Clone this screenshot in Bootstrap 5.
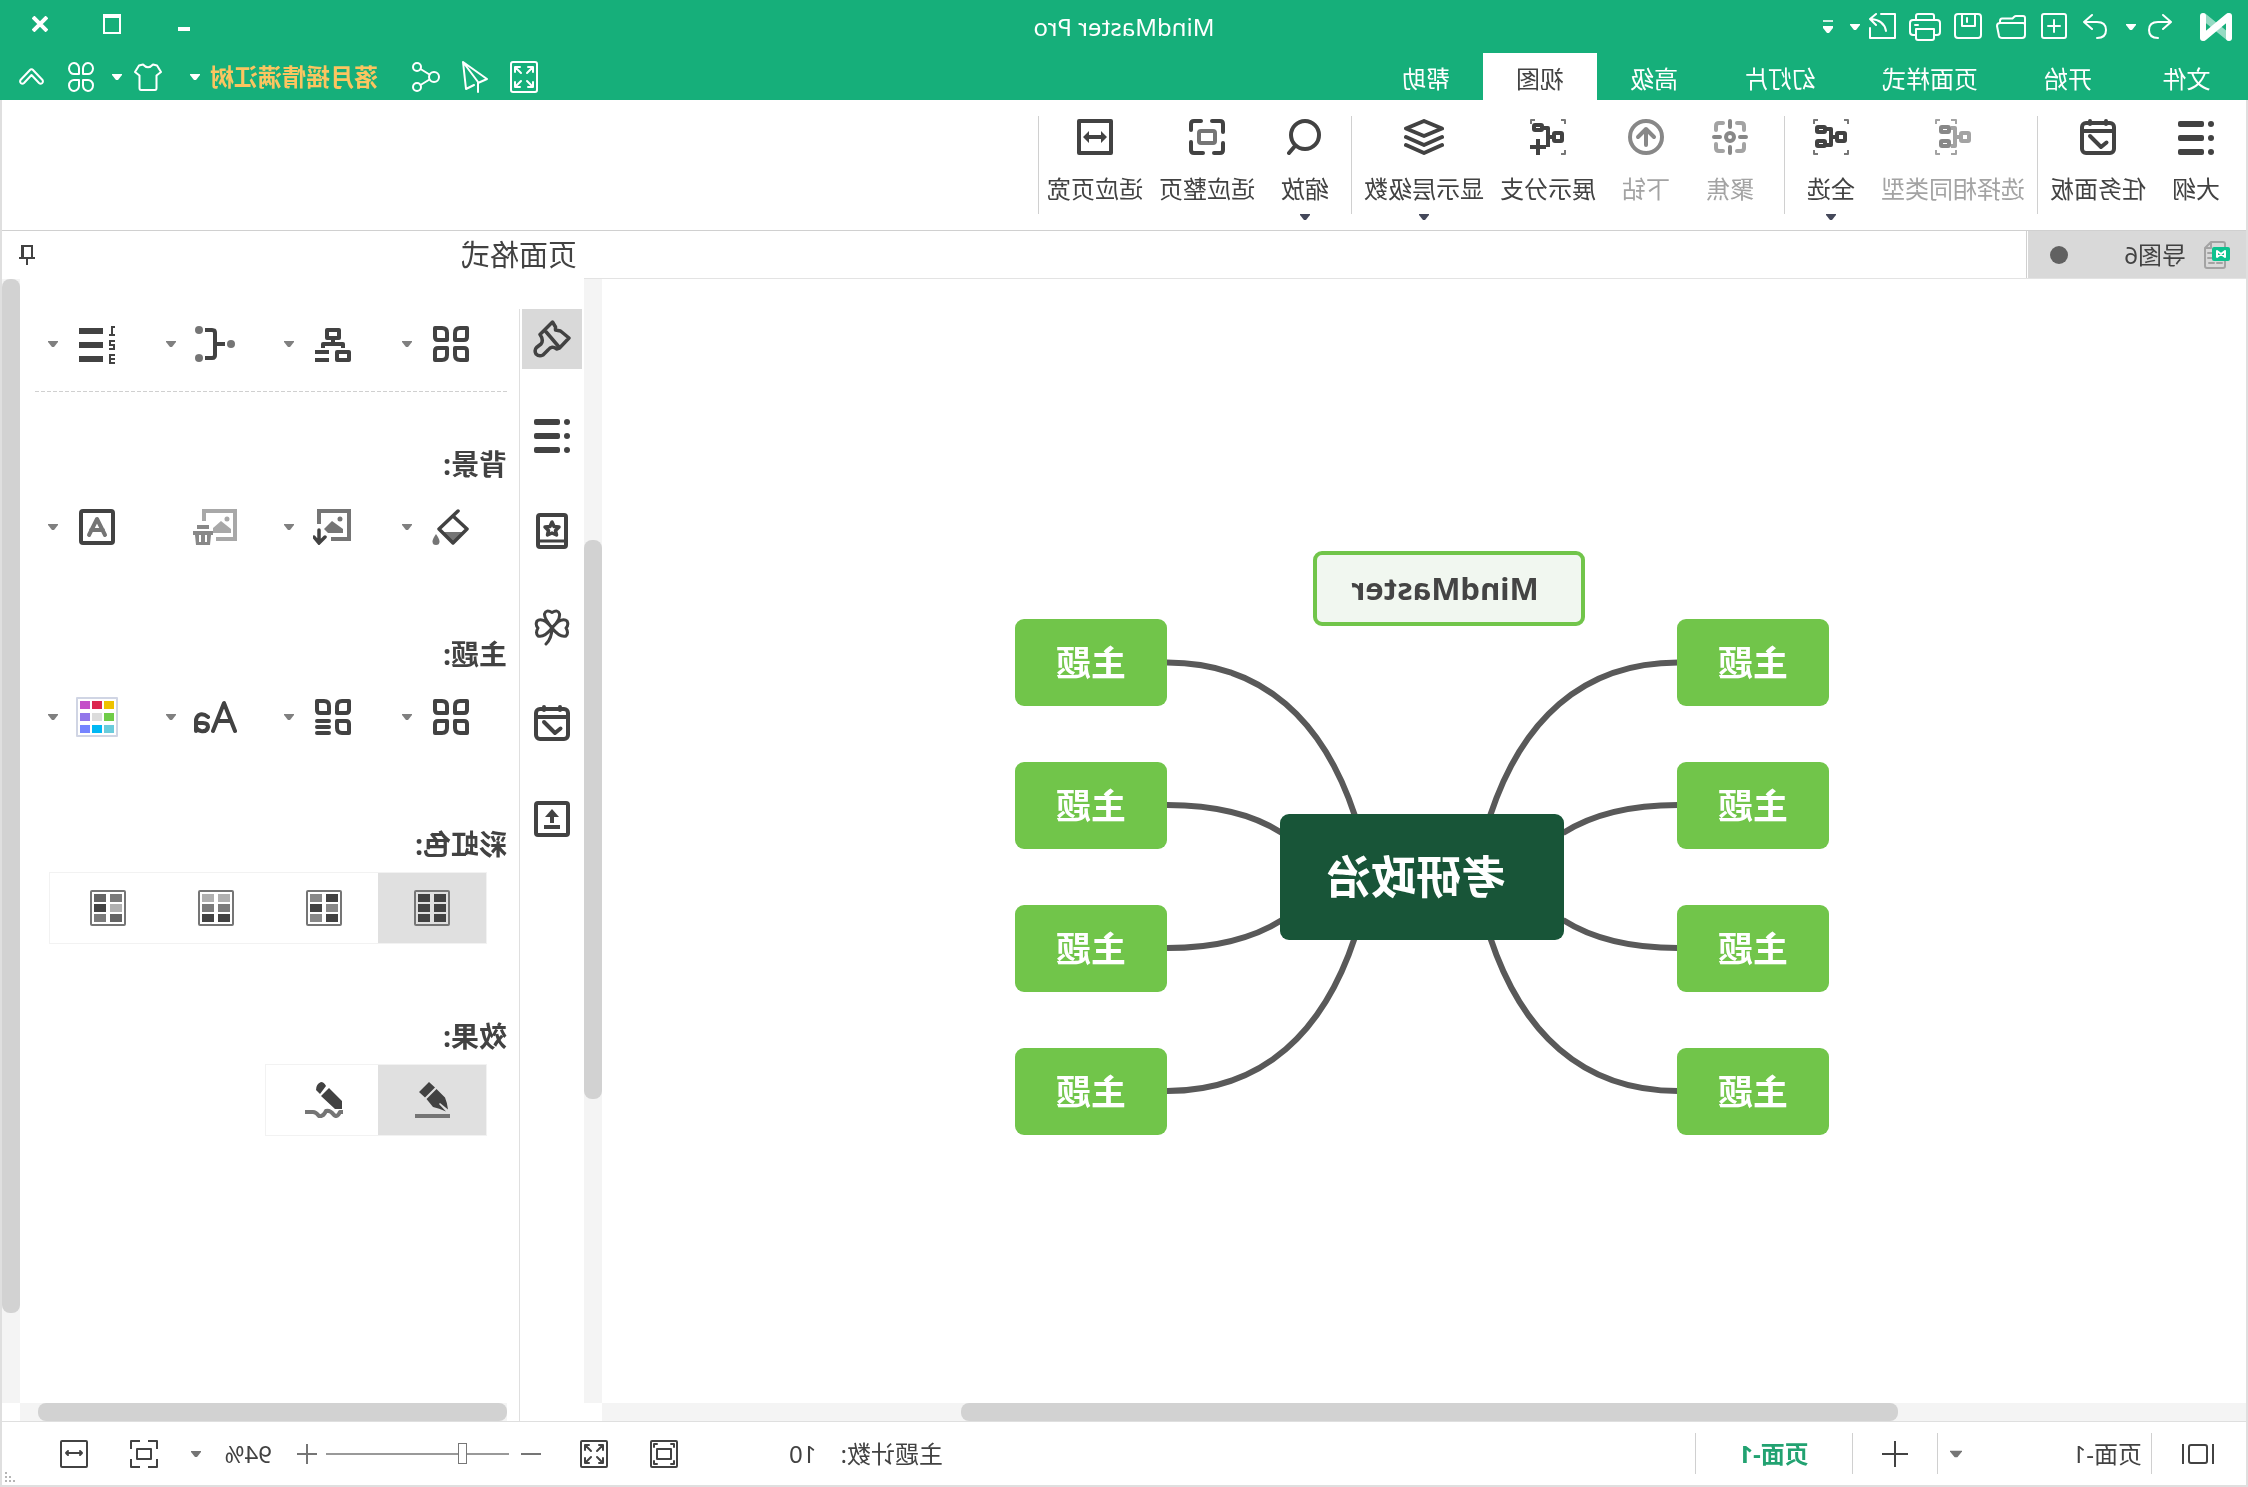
<!DOCTYPE html>
<html lang="zh-CN">
<head>
<meta charset="utf-8">
<meta name="viewport" content="width=device-width, initial-scale=1">
<title>MindMaster Pro</title>
<link href="https://cdn.jsdelivr.net/npm/bootstrap@5.3.0/dist/css/bootstrap.min.css" rel="stylesheet">
<style>
:root{--brand:#16af7a;--ink:#424242;--edge:#dfdfdf;--line:#d0d0d0;--track:#f4f4f4;--thumb:#d2d2d2;--leaf:#71c54a}
body{font-family:"Noto Sans","Noto Sans CJK SC",sans-serif;font-size:24px;line-height:32px;color:var(--ink);background:#fff;overflow-x:hidden}
/* the whole window is shown mirrored; icon paint defaults are inherited from here */
.app{transform:scaleX(-1);fill:none;stroke:currentColor;stroke-linecap:round;stroke-linejoin:round}
svg{display:block;flex:none}
.app button{background:none;border:0;padding:0;color:inherit;display:flex;align-items:center;justify-content:center;flex:none}
.fillc{fill:currentColor;stroke:none}
/* title bar */
.topbar{background:var(--brand);color:#fff}
.titlerow{display:grid;grid-template-columns:1fr auto 1fr;height:53px}
.quick{padding-left:16px}
.quick button{width:43px;height:53px}
.quick .q-narrow{width:39px}
.quick .q-caret{width:12px}
.quick .q-undo{margin-left:20px}
.quick .q-redo{margin-left:10px}
.quick .q-more{width:20px;margin-left:11px}
.apptitle{font-size:24px;line-height:53px}
.winctl{padding-right:4px}
.winctl button{width:72px;height:48px}
.menurow{height:47px}
.menurow .nav-link{padding:0 33px;color:#fff;line-height:51px;height:47px;white-space:nowrap;border-radius:0}
.menurow .filetab{padding:0;width:123px;text-align:center}
.menurow .nav-link.active{background:#fff;color:var(--ink)}
.tools{padding-right:19px}
.tools .t-wide{width:49px;height:47px}
.tools .t-apps{margin-left:18px}
.username{color:#fbc560;font-weight:700;margin:0 10px 0 24px;line-height:51px}
/* ribbon */
.frame{border:solid var(--edge);border-width:0 2px 2px}
.ribbon{height:131px;border-bottom:1px solid var(--line)}
.rgroup{padding:19px 4px 0;display:flex;align-items:flex-start}
.rgroup.first{padding-left:8px}
.rgroup.roomy{padding-left:12px}
.app .rbtn{flex-direction:column;min-width:84px;padding:0 8px;white-space:nowrap}
.rbtn span{margin:18px 0 9px}
.app .rbtn:disabled{color:#a3a3a3}
.rcaret{color:#44485a}
.vline{width:1px;background:var(--line);flex:none}
.ribbon .vline{height:98px;margin-top:16px}
/* document area */
.doctabs{height:48px;border-bottom:1px solid #e3e3e3}
.app .doctab{width:218px;background:#d9d9d9;margin-right:1px;padding:0 22px 0 16px}
.docname{margin:0 auto 0 18px}
.track{background:var(--track)}
.thumb{background:var(--thumb);border-radius:8px}
.vtrack{width:18px;flex:none}
.htrack{height:18px;flex:none}
.canvas{padding:2px 0 0 4px}
.stage{position:relative;width:814px;height:586px;flex:none}
.stage .topic{position:absolute;display:flex;align-items:center;justify-content:center;border-radius:9px;font-weight:700;color:#fff}
.stage .leaf{width:152px;height:87px;background:var(--leaf);font-size:35px}
.leaf.lft{left:0}.leaf.rgt{right:0}
.r1{top:70px}.r2{top:213px}.r3{top:356px}.r4{top:499px}
.stage .root{left:265px;top:265px;width:284px;height:126px;background:#185538;font-size:45px;padding-left:12px}
.stage .floating{left:244px;top:2px;width:272px;height:75px;background:#f1f7f0;border:4px solid var(--leaf);color:#444;font-size:31px;line-height:36px;padding:0 0 2px 8px}
.links{position:absolute;inset:0;stroke:#595959;stroke-width:6;stroke-linecap:butt}
/* format panel */
.panel{width:582px;flex:none}
.panelhead{height:48px;padding:0 17px 0 7px;font-size:29px}
.rail{width:64px;padding-top:30px}
.rail button{width:60px;height:60px;margin:0 2px 36px}
.app .rail .active{background:#d9d9d9}
.vrule{width:1px;background:var(--edge);margin-top:30px}
.pbody{padding:47px 15px 0 12px}
.prow{margin-left:36px;gap:49px;height:36px;display:flex}
.pcell{gap:19px}
.picon{width:40px;display:flex;justify-content:center;flex:none}
.pcaret{color:#808080}
.dash{height:1px;margin:29px 0 54px;background:repeating-linear-gradient(90deg,#d0d0d0 0 4px,transparent 4px 6px)}
.phead{font-size:28px;line-height:36px;font-weight:700;margin:0 0 27px}
.prow+.phead{margin-top:91px}
.phead.tight{margin-bottom:10px}
.seg{display:inline-flex;border:1px solid #f2f2f2;height:72px;margin-left:20px;padding-right:4px}
.seg input{position:absolute;opacity:0}
.seg label{width:108px;display:flex;align-items:center;justify-content:center}
.seg input:checked+label{background:#e0e0e0}
.seg+.phead{margin-top:74px}
/* status bar */
.status{height:64px;border-top:1px solid var(--edge)}
.status .vline{height:41px}
.status select{appearance:none;border:0;background:none;color:inherit;padding:0;line-height:32px}
.app .s-list{margin:0 30px 0 32px}
.pagepick{width:180px;margin-left:9px}
.s-drop{color:#757575;margin-right:12px}
.app .s-add{width:84px;height:41px}
.curpage{width:156px;color:#22a271;font-weight:700;text-decoration:none;text-align:center}
.s-count{margin:0 111px 0 24px}
.s-gap{margin-right:42px}
.s-full{margin-right:39px}
.s-fit{margin:0 42px 0 33px}
.s-last{margin-right:58px}
.zoompick{width:53px;margin:0 18px 0 25px}
.zoomer{appearance:none;width:183px;height:22px;background:none;margin:0 9px 0 12px}
.zoomer::-webkit-slider-runnable-track{height:2px;background:#999}
.zoomer::-webkit-slider-thumb{appearance:none;width:9px;height:21px;margin-top:-10px;background:#fff;border:1px solid #777}
.grip{position:absolute;right:3px;bottom:3px;color:#b5b5b5}
.mid{color:#757575}
</style>
</head>
<body>
<svg width="0" height="0" class="position-absolute">
 <symbol id="caret" viewBox="0 0 10 6"><path d="M0 0h10v1L6 6H4L0 1z" fill="currentColor" stroke="none"/></symbol>
 <symbol id="lines" viewBox="0 0 36 36"><g fill="currentColor" stroke="none"><circle cx="3" cy="5" r="3"/><circle cx="3" cy="19" r="3"/><circle cx="3" cy="33" r="3"/><rect x="10" y="2" width="26" height="6" rx="2"/><rect x="10" y="16" width="26" height="6" rx="2"/><rect x="10" y="30" width="26" height="6" rx="2"/></g></symbol>
 <symbol id="task" viewBox="0 0 36 36"><g stroke-width="4"><rect x="2" y="4" width="32" height="30" rx="4"/><path d="M2 12H34M10 2V5M26 2V5M9.500 23.500L15 28L26 17"/></g></symbol>
 <symbol id="four" viewBox="0 0 36 36"><g stroke-width="4"><path d="M2 2H9Q14 2 14 7V14H5Q2 14 2 11zM34 2H27Q22 2 22 7V14H31Q34 14 34 11zM5 22H14V29Q14 34 9 34H2V25Q2 22 5 22zM31 22H22V29Q22 34 27 34H34V25Q34 22 31 22z"/></g></symbol>
</svg>

<div class="app min-vh-100 d-flex flex-column">
<header class="topbar">
 <div class="titlerow">
  <div class="quick d-flex align-items-start">
   <svg width="32" height="53" viewBox="0 0 32 53"><path d="M3.500 37L28 17" opacity=".55" stroke-width="7"/><path d="M3 16V38M29 16V38" stroke-width="6"/><path d="M4 17L28 37" stroke-width="7"/></svg>
   <button class="q-narrow q-undo" aria-label="撤销"><svg width="24" height="53" viewBox="0 0 24 53" stroke-width="2"><path d="M9 15L1 22L9 29M1 22H14Q23 22 23 30Q23 38 14 38"/></svg></button>
   <button class="q-caret ms-1" aria-label="撤销历史"><svg width="10" height="6"><use href="#caret"/></svg></button>
   <button class="q-narrow q-redo" aria-label="重做"><svg width="24" height="53" viewBox="0 0 24 53" stroke-width="2"><path d="M15 15L23 22L15 29M23 22H10Q1 22 1 30Q1 38 10 38"/></svg></button>
   <button aria-label="新建"><svg width="26" height="53" viewBox="0 0 26 53" stroke-width="2"><rect x="1" y="14" width="24" height="24" rx="2"/><path d="M13 20V32M7 26H19"/></svg></button>
   <button aria-label="打开"><svg width="30" height="53" viewBox="0 0 30 53" stroke-width="2"><path d="M1 35V18Q1 16 3 16H10Q11 16 12 17L13.500 18.500H24Q26 18.500 26 21V23M1 25Q1 23 3 23H26Q29 23 29 26L27 36Q26.500 38 24 38H4Q1 38 1 35z"/></svg></button>
   <button aria-label="保存"><svg width="28" height="53" viewBox="0 0 28 53" stroke-width="2"><rect x="1" y="14" width="26" height="24" rx="3"/><path d="M7 14V26H20V14M15 18V22"/></svg></button>
   <button aria-label="打印"><svg width="32" height="53" viewBox="0 0 32 53" stroke-width="2"><path d="M7 20V16Q7 14 9 14H23Q25 14 25 16V20M7 35H4Q1 35 1 32V23Q1 20 4 20H28Q31 20 31 23V32Q31 35 28 35H25M7 29H25V38Q25 40 23 40H9Q7 40 7 38zM23 25H26"/></svg></button>
   <button aria-label="导出"><svg width="27" height="53" viewBox="0 0 27 53" stroke-width="2"><path d="M15 14H1V38H26V28M10 31Q12 20 25 19M20 14L26 19L20 25"/></svg></button>
   <button class="q-caret" aria-label="导出选项"><svg width="10" height="6"><use href="#caret"/></svg></button>
   <button class="q-more" aria-label="自定义"><svg width="10" height="13" viewBox="0 0 10 13" class="fillc"><path d="M0 0H10V2H0z" opacity=".8"/><path d="M0 6H10V8L6 13H4L0 8z"/></svg></button>
  </div>
  <div class="apptitle">MindMaster Pro</div>
  <div class="winctl d-flex justify-content-end align-items-start">
   <button aria-label="最小化"><svg width="12" height="16" viewBox="0 0 12 16" class="fillc"><rect y="11" width="12" height="4"/></svg></button>
   <button aria-label="最大化"><svg width="18" height="20" viewBox="0 0 18 20" class="fillc"><path d="M0 0H18V20H0zM2 4V18H16V4z" fill-rule="evenodd"/></svg></button>
   <button aria-label="关闭"><svg width="16" height="16" viewBox="0 0 16 16" stroke-width="4" stroke-linecap="butt"><path d="M1 1L15 15M15 1L1 15"/></svg></button>
  </div>
 </div>
 <div class="menurow d-flex">
  <nav class="nav flex-nowrap">
   <a class="nav-link filetab" href="#">文件</a><a class="nav-link" href="#">开始</a><a class="nav-link" href="#">页面样式</a><a class="nav-link" href="#">幻灯片</a><a class="nav-link" href="#">高级</a><a class="nav-link active" href="#">视图</a><a class="nav-link" href="#">帮助</a>
  </nav>
  <div class="tools d-flex ms-auto align-items-center">
   <button class="t-wide" aria-label="全屏"><svg width="28" height="32" viewBox="0 0 28 32" stroke-width="2"><rect x="1" y="1" width="26" height="30" rx="2"/><path d="M5 11V6H10M18 6H23V11M23 21V26H18M10 26H5V21M5.500 6.500L11 12M22.500 6.500L17 12M22.500 25.500L17 20M5.500 25.500L11 20"/></svg></button>
   <button class="t-wide" aria-label="发送"><svg width="26" height="32" viewBox="0 0 26 32" stroke-width="2"><path d="M10 22L1 18L25 1L22 28L14 24M25 1L10 21V31"/></svg></button>
   <button class="t-wide" aria-label="分享"><svg width="28" height="32" viewBox="0 0 28 32" stroke-width="2"><circle cx="6" cy="16" r="5"/><circle cx="23" cy="6" r="4"/><circle cx="23" cy="26" r="4"/><path d="M10.500 13.500L19.500 8M10.500 18.500L19.500 24"/></svg></button>
   <span class="username">落月摇情满江树</span>
   <button aria-label="账户"><svg width="10" height="6"><use href="#caret"/></svg></button>
   <button class="ms-4 ps-1" aria-label="皮肤"><svg width="28" height="28" viewBox="0 0 28 28" stroke-width="2"><path d="M9 1.500Q14 7 19 1.500L23 2.500L27 9L22.500 12.500V25Q22.500 27 21 27H7Q5.500 27 5.500 25V12.500L1 9L5 2.500z"/></svg></button>
   <button class="ms-2 ps-1" aria-label="皮肤选项"><svg width="10" height="6"><use href="#caret"/></svg></button>
   <button class="t-apps" aria-label="应用"><svg width="26" height="30" viewBox="0 0 26 30" stroke-width="2"><path d="M11 12H6.500A5 5.500 0 1 1 11 7zM15 12V7A5 5.500 0 1 1 19.500 12zM11 18V23A5 5.500 0 1 1 6.500 18zM15 18H19.500A5 5.500 0 1 1 15 23z"/></svg></button>
   <button class="ms-4" aria-label="收起"><svg width="25" height="17" viewBox="0 0 25 17" stroke-width="2"><path d="M12.500 1.200Q13.500 1.200 14 2L23.500 12Q24.500 14 23 15.200Q21.500 16.300 20 15L12.500 7L5 15Q3.500 16.300 2 15.200Q.5 14 1.500 12L11 2Q11.500 1.200 12.500 1.200z"/></svg></button>
  </div>
 </div>
</header>

<div class="frame flex-grow-1 d-flex flex-column">
 <div class="ribbon d-flex">
  <div class="rgroup first">
   <button class="rbtn"><svg width="36" height="36"><use href="#lines"/></svg><span>大纲</span></button>
   <button class="rbtn"><svg width="36" height="36"><use href="#task"/></svg><span>任务面板</span></button>
  </div><div class="vline"></div>
  <div class="rgroup">
   <button class="rbtn" disabled><svg width="36" height="36" viewBox="0 0 36 36" stroke-width="4" stroke-linecap="butt"><path d="M15 5V1H20M31 1H35V5M15 31V35H20M31 35H35V31" stroke-width="2"/><rect x="2" y="14" width="8" height="8" rx="1"/><path d="M10 18H16M20 9H16V27H20"/><g stroke="#888"><rect x="22" y="8" width="8" height="5" rx="1"/><rect x="22" y="22" width="8" height="5" rx="1"/></g></svg><span>选择相同类型</span></button>
   <button class="rbtn"><svg width="36" height="36" viewBox="0 0 36 36" stroke-width="4" stroke-linecap="butt"><path d="M1 5V1H5M31 1H35V5M1 31V35H5M31 35H35V31" stroke-width="2" stroke="#777"/><rect x="4" y="14" width="8" height="8" rx="1"/><path d="M12 18H18M24 10H18V26H24"/><rect x="24" y="8" width="8" height="5" rx="1"/><rect x="24" y="22" width="8" height="5" rx="1"/></svg><span>全选</span><svg class="rcaret" width="10" height="6"><use href="#caret"/></svg></button>
  </div><div class="vline"></div>
  <div class="rgroup roomy">
   <button class="rbtn" disabled><svg width="36" height="36" viewBox="0 0 36 36" stroke-width="4"><path d="M4 11V7Q4 4 7 4H11M25 4H29Q32 4 32 7V11M32 25V29Q32 32 29 32H25M11 32H7Q4 32 4 29V25"/><g stroke="#888"><circle cx="18" cy="18" r="4"/><path d="M18 2V8M18 28V34M2 18H8M28 18H34"/></g></svg><span>聚焦</span></button>
   <button class="rbtn" disabled><svg width="36" height="36" viewBox="0 0 36 36" stroke-width="4" stroke="#888"><circle cx="18" cy="18" r="16"/><path d="M18 26V10M10 18L18 10L26 18"/></svg><span>下钻</span></button>
   <button class="rbtn"><svg width="36" height="36" viewBox="0 0 36 36" stroke-width="4" stroke-linecap="butt"><path d="M1 5V1H5M31 1H35V5M1 31V35H5" stroke-width="2" stroke="#777"/><rect x="4" y="14" width="8" height="8" rx="1"/><path d="M12 18H18M24 9H18V28"/><rect x="24" y="6" width="8" height="5" rx="1"/><path d="M28 20V36M20 28H36"/></svg><span>展示分支</span></button>
   <button class="rbtn"><svg width="40" height="36" viewBox="0 0 40 36" stroke-width="4"><path d="M20 2L38 9.500L20 17L2 9.500zM2 18L20 26L38 18M2 26L20 34L38 26"/></svg><span>显示层级数</span><svg class="rcaret" width="10" height="6"><use href="#caret"/></svg></button>
  </div><div class="vline"></div>
  <div class="rgroup pe-0">
   <button class="rbtn"><svg width="36" height="36" viewBox="0 0 36 36" stroke-width="4"><circle cx="18" cy="16" r="14"/><path d="M28 27L34 34"/></svg><span>缩放</span><svg class="rcaret" width="10" height="6"><use href="#caret"/></svg></button>
   <button class="rbtn"><svg width="36" height="36" viewBox="0 0 36 36" stroke-width="4"><path d="M2 13V5Q2 2 5 2H13M24 2H31Q34 2 34 5V11M34 23V31Q34 34 31 34H22M11 34H5Q2 34 2 31V24"/><rect x="10" y="12" width="16" height="12" rx="2" stroke="#757575"/></svg><span>适应整页</span></button>
   <button class="rbtn"><svg width="36" height="36" viewBox="0 0 36 36" stroke-width="4"><rect x="2" y="2" width="32" height="32"/><path d="M10 18H26"/><path class="fillc" d="M6 18L12 12V24zM30 18L24 12V24z"/></svg><span>适应页宽</span></button>
  </div><div class="vline"></div>
 </div>

 <main class="flex-grow-1 d-flex">
  <section class="flex-grow-1 d-flex flex-column">
   <div class="doctabs d-flex">
    <button class="doctab" type="button">
     <svg width="26" height="28" viewBox="0 0 26 28" stroke="#a3a3a3" stroke-width="2"><path d="M5 3Q5 1 7 1H19L25 7V25Q25 27 23 27H7Q5 27 5 25zM19 1V7H25M8 22H13M16 22H21M18 12H22M18 17H22"/><rect x="0" y="6" width="18" height="14" rx="2" fill="#0ec28f" stroke="none"/><path d="M5 16V10L13 16V10L5 16" stroke="#fff"/></svg>
     <span class="docname">导图6</span><svg width="18" height="18" viewBox="0 0 18 18"><circle cx="9" cy="9" r="9" fill="#616161" stroke="none"/></svg>
    </button><div class="vline"></div>
   </div>
   <div class="flex-grow-1 d-flex">
    <div class="canvas flex-grow-1 d-flex align-items-center justify-content-center">
     <div class="stage">
      <svg class="links" width="814" height="586" viewBox="420 549 814 586">
       <path d="M571 662.500C668 662.500 728 722 759 816M571 805Q642 805 686 833M571 948Q642 948 686 920M571 1091C668 1091 728 1031 759 937M1082 662.500C985 662.500 925 722 894 816M1082 805Q1011 805 967 833M1082 948Q1011 948 967 920M1082 1091C985 1091 925 1031 894 937"/>
      </svg>
      <div class="topic floating">MindMaster</div>
      <div class="topic root">考研政治</div>
      <div class="topic leaf lft r1">主题</div><div class="topic leaf lft r2">主题</div><div class="topic leaf lft r3">主题</div><div class="topic leaf lft r4">主题</div>
      <div class="topic leaf rgt r1">主题</div><div class="topic leaf rgt r2">主题</div><div class="topic leaf rgt r3">主题</div><div class="topic leaf rgt r4">主题</div>
     </div>
    </div>
    <div class="vtrack track d-flex flex-column"><div style="flex:261"></div><div class="thumb" style="flex:559"></div><div style="flex:304"></div></div>
   </div>
   <div class="d-flex"><div class="htrack track flex-grow-1 d-flex"><div style="flex:348"></div><div class="thumb" style="flex:937"></div><div style="flex:359"></div></div><div class="vtrack"></div></div>
  </section>

  <aside class="panel d-flex flex-column">
   <div class="panelhead d-flex align-items-center justify-content-between"><span>页面格式</span>
    <button aria-label="固定"><svg width="16" height="20" viewBox="0 0 16 20" stroke-width="2" stroke-linecap="butt" stroke-linejoin="miter"><path d="M3 13V1H13V13M0 13H16M8 13V20"/><path d="M12.500 0V13" stroke-width="3"/></svg></button></div>
   <div class="flex-grow-1 d-flex">
    <div class="rail">
     <button class="active" aria-label="页面格式"><svg width="38" height="38" viewBox="0 0 38 38" stroke-width="3.500"><path d="M18.500 2L15.500 7V10L10.500 11L2 18L11.500 28L14.500 29Q19 25 23 30L28 35Q32 37 35 34Q37 30 34.500 27.500L30 24Q27 20 31 14.500zM26.500 10L12 27"/></svg></button>
     <button aria-label="大纲"><svg width="36" height="36"><use href="#lines"/></svg></button>
     <button aria-label="图标库"><svg width="32" height="36" viewBox="0 0 32 36" stroke-width="4"><rect x="2" y="2" width="28" height="32" rx="2"/><path d="M3 28H29" stroke-width="3"/><path d="M16 9L18 13.500L23 14L19.500 17.500L20.500 22L16 20L11.500 22L12.500 17.500L9 14L14 13.500z" stroke-width="3.500"/></svg></button>
     <button aria-label="剪贴画"><svg width="36" height="38" viewBox="0 0 36 38" stroke-width="3"><path d="M18 20C12 14 10 10 10.500 6Q12 1 18 4.500Q24 1 25.500 6Q26 10 18 20zM18 20C12 12 6 10 3 13Q1 17 4 20Q1 25 4 28Q10 30 18 20zM18 20C24 12 30 10 33 13Q35 17 32 20Q35 25 32 28Q26 30 18 20zM18 20Q18 30 24 36"/></svg></button>
     <button aria-label="任务"><svg width="36" height="36"><use href="#task"/></svg></button>
     <button aria-label="导出"><svg width="36" height="36" viewBox="0 0 36 36" stroke-width="4"><rect x="2" y="2" width="32" height="32" rx="2"/><path d="M10 26H26M18 22V14" stroke-linecap="butt"/><path class="fillc" d="M18 8L25 16H11z"/></svg></button>
    </div>
    <div class="vrule"></div>
    <div class="flex-grow-1 d-flex flex-column">
     <div class="pbody flex-grow-1">
      <div class="prow">
       <button class="pcell" aria-label="布局"><span class="picon"><svg width="36" height="36"><use href="#four"/></svg></span><svg class="pcaret" width="10" height="6"><use href="#caret"/></svg></button>
       <button class="pcell" aria-label="结构"><span class="picon"><svg width="36" height="36" viewBox="0 0 36 36" stroke-width="4" stroke-linecap="butt" stroke-linejoin="round"><path d="M12 4H24V12H12zM18 12V18M8 22V18H28V22M2 26H14V34H2zM22 26H36M22 34H36"/></svg></span><svg class="pcaret" width="10" height="6"><use href="#caret"/></svg></button>
       <button class="pcell" aria-label="连线"><span class="picon"><svg width="40" height="36" viewBox="0 0 40 36" stroke-width="4" stroke-linecap="butt"><g fill="#757575" stroke="none"><circle cx="4" cy="18" r="4"/><circle cx="36" cy="4" r="4"/><circle cx="36" cy="32" r="4"/></g><path d="M10 18H20M30 4H23Q20 4 20 7V29Q20 32 23 32H30"/></svg></span><svg class="pcaret" width="10" height="6"><use href="#caret"/></svg></button>
       <button class="pcell" aria-label="编号"><span class="picon"><svg width="36" height="40" viewBox="0 0 36 40" stroke-width="2" stroke-linecap="butt" stroke-linejoin="miter"><path d="M0 3H3V11M0 11H6M0 17H5V21H1V25H6M0 31H5V39H0M0 35H5"/><path d="M12 7H36M12 21H36M12 35H36" stroke-width="6"/></svg></span><svg class="pcaret" width="10" height="6"><use href="#caret"/></svg></button>
      </div>
      <div class="dash"></div>
      <h2 class="phead">背景:</h2>
      <div class="prow">
       <button class="pcell" aria-label="填充"><span class="picon"><svg width="40" height="36" viewBox="0 0 40 36" stroke-width="3.500"><path class="fillc mid" d="M7 23H30L19 34z"/><path d="M13 2L32 20L18 34L4 20L18 7"/><path class="fillc mid" d="M35 25Q38.500 30 38.500 32.500A3.500 3.500 0 0 1 31.500 32.500Q31.500 30 35 25z"/></svg></span><svg class="pcaret" width="10" height="6"><use href="#caret"/></svg></button>
       <button class="pcell" aria-label="背景图片"><span class="picon"><svg width="40" height="36" viewBox="0 0 40 36" stroke-width="4" stroke-linecap="butt" stroke-linejoin="miter"><g class="mid"><path d="M34 15V2H4V30H22"/><circle class="fillc" cx="13" cy="10" r="2.500"/><path class="fillc" d="M10 20L21 12L29 20L25 24H10z"/></g><path d="M34 21V33M28 28L34 34L39 28" stroke-linecap="round" stroke-width="3.500"/></svg></span><svg class="pcaret" width="10" height="6"><use href="#caret"/></svg></button>
       <button class="pcell" aria-label="删除背景" disabled><span class="picon"><svg width="44" height="36" viewBox="0 0 44 36" stroke-width="4" stroke-linecap="butt" stroke-linejoin="miter"><g stroke="#a8a8a8" fill="#a8a8a8"><path d="M33 12V2H2V30H21" fill="none"/><g stroke="none"><circle cx="10" cy="10" r="2.500"/><path d="M6 20L16 12L24 19V24H6z"/></g></g><path d="M28 18H40" stroke="#888"/><path fill="#888" stroke="none" fill-rule="evenodd" d="M24 22H44V26H42L41 36H27L26 26H24zM30 26V33H32V26zM36 26V33H38V26z"/></svg></span><svg class="invisible" width="10" height="6"><use href="#caret"/></svg></button>
       <button class="pcell" aria-label="水印"><span class="picon"><svg width="36" height="36" viewBox="2 0 36 36" stroke-width="4"><rect x="4" y="2" width="32" height="32" rx="2"/><path d="M12 26L20 10L28 26M14 21H26" stroke="#757575"/></svg></span><svg class="pcaret" width="10" height="6"><use href="#caret"/></svg></button>
      </div>
      <h2 class="phead">主题:</h2>
      <div class="prow">
       <button class="pcell" aria-label="主题"><span class="picon"><svg width="36" height="36"><use href="#four"/></svg></span><svg class="pcaret" width="10" height="6"><use href="#caret"/></svg></button>
       <button class="pcell" aria-label="主题样式"><span class="picon"><svg width="36" height="36" viewBox="0 0 36 36" stroke-width="4"><path d="M2 2H9Q14 2 14 7V14H5Q2 14 2 11zM34 2H27Q22 2 22 7V14H31Q34 14 34 11zM5 22H14V29Q14 34 9 34H2V25Q2 22 5 22zM22 22H34M22 28H34M22 34H34"/></svg></span><svg class="pcaret" width="10" height="6"><use href="#caret"/></svg></button>
       <button class="pcell" aria-label="字体"><span class="picon"><svg width="44" height="36" viewBox="0 0 44 36" stroke-width="4"><path d="M2 32L13 4L24 32M6 22H20M29 18Q34 14 38 16Q41 18 41 22V32M41 24H34Q29 24 29 28Q30 33 36 32Q40 31 41 28"/></svg></span><svg class="pcaret" width="10" height="6"><use href="#caret"/></svg></button>
       <button class="pcell" aria-label="颜色"><span class="picon"><svg width="42" height="40" viewBox="0 0 42 40" stroke="none"><rect x="1" y="1" width="40" height="38" stroke="#d0d5e4" stroke-width="2"/><rect x="4" y="4" width="10" height="8" fill="#eec200"/><rect x="16" y="4" width="10" height="8" fill="#dc2850"/><rect x="28" y="4" width="10" height="8" fill="#c44fc8"/><rect x="4" y="16" width="10" height="8" fill="#70cc48"/><rect x="16" y="16" width="10" height="8" fill="#dcdcdc"/><rect x="28" y="16" width="10" height="8" fill="#9276ea"/><rect x="4" y="28" width="10" height="8" fill="#6accdc"/><rect x="16" y="28" width="10" height="8" fill="#00b8f4"/><rect x="28" y="28" width="10" height="8" fill="#7684ff"/></svg></span><svg class="pcaret" width="10" height="6"><use href="#caret"/></svg></button>
      </div>
      <h2 class="phead tight">彩虹色:</h2>
      <div class="seg">
       <input type="radio" name="rb" id="rb1" checked><label for="rb1" aria-label="彩虹色一"><svg width="36" height="36" viewBox="0 0 36 36" stroke="none"><rect x="1" y="1" width="34" height="34" rx="1" stroke="#757575" stroke-width="2"/><path fill="#424242" d="M4 4H16V12H4zM20 4H32V12H20zM4 14H16V22H4zM20 14H32V22H20zM4 24H16V32H4zM20 24H32V32H20z"/></svg></label>
       <input type="radio" name="rb" id="rb2"><label for="rb2" aria-label="彩虹色二"><svg width="36" height="36" viewBox="0 0 36 36" stroke="none"><rect x="1" y="1" width="34" height="34" rx="1" stroke="#757575" stroke-width="2"/><path d="M4 4H16V12H4zM20 14H32V22H20zM4 24H16V32H4z" fill="#424242"/><path d="M20 4H32V12H20zM4 14H16V22H4zM20 24H32V32H20z" fill="#888"/></svg></label>
       <input type="radio" name="rb" id="rb3"><label for="rb3" aria-label="彩虹色三"><svg width="36" height="36" viewBox="0 0 36 36" stroke="none"><rect x="1" y="1" width="34" height="34" rx="1" stroke="#757575" stroke-width="2"/><path d="M4 4H16V12H4zM20 4H32V12H20z" fill="#b0b0b0"/><path d="M4 14H16V22H4zM20 14H32V22H20z" fill="#7b7b7b"/><path d="M4 24H16V32H4zM20 24H32V32H20z" fill="#424242"/></svg></label>
       <input type="radio" name="rb" id="rb4"><label for="rb4" aria-label="彩虹色四"><svg width="36" height="36" viewBox="0 0 36 36" stroke="none"><rect x="1" y="1" width="34" height="34" rx="1" stroke="#757575" stroke-width="2"/><path d="M4 4H16V12H4zM20 24H32V32H20z" fill="#7b7b7b"/><path d="M20 4H32V12H20zM4 24H16V32H4z" fill="#646464"/><path d="M4 14H16V22H4z" fill="#b0b0b0"/><path d="M20 14H32V22H20z" fill="#424242"/></svg></label>
      </div>
      <h2 class="phead tight">效果:</h2>
      <div class="seg">
       <input type="radio" name="fx" id="fx1" checked><label for="fx1" aria-label="普通"><svg width="36" height="36" viewBox="0 0 36 36" stroke="none"><path d="M21 0L31 10L25 15.500L15 5.500zM13.500 7L23.500 17L17 25Q11 26 4 29.500L11 22L10 21L2 27.500Q3 20 5 15.500z" fill="#424242"/><path d="M0 32H35V36H0z" fill="#757575"/></svg></label>
       <input type="radio" name="fx" id="fx2"><label for="fx2" aria-label="手绘"><svg width="38" height="36" viewBox="0 0 38 36" stroke="none"><path d="M17 4Q19 0 22 0Q27 2 27 8L23 12zM14 6L22 14L8 27H1V19z" fill="#424242"/><path d="M0 30H3Q6 36 9 33Q13 28 17 29Q20 35 24 34Q27 30 30 30H38" stroke="#757575" stroke-width="4" stroke-linecap="butt"/></svg></label>
      </div>
     </div>
     <div class="htrack d-flex ps-2 ms-1"><div class="track flex-grow-1 d-flex"><div class="thumb" style="flex:469"></div><div style="flex:18"></div></div></div>
    </div>
    <div class="d-flex flex-column"><div class="vtrack track flex-grow-1 d-flex flex-column"><div class="thumb" style="flex:1034"></div><div style="flex:90"></div></div><div class="htrack"></div></div>
   </div>
  </aside>
 </main>

 <footer class="status d-flex align-items-center position-relative">
  <button class="s-list" aria-label="页面列表"><svg width="32" height="20" viewBox="0 0 32 20" stroke-width="2" stroke-linecap="butt"><path d="M1 0V20M31 0V20"/><rect x="7" y="1" width="18" height="18" rx="2"/></svg></button>
  <div class="vline"></div>
  <select class="pagepick" aria-label="页面"><option>页面-1</option></select>
  <svg class="s-drop" width="12" height="8" viewBox="0 0 10 6"><use href="#caret"/></svg>
  <div class="vline"></div>
  <button class="s-add" aria-label="新建页面"><svg width="26" height="26" viewBox="0 0 26 26" stroke-width="2" stroke-linecap="butt"><path d="M13 0V26M0 13H26"/></svg></button>
  <div class="vline"></div>
  <a href="#" class="curpage">页面-1</a>
  <div class="vline"></div>
  <span class="ms-auto">主题计数:</span><span class="s-count">10</span>
  <button class="s-gap" aria-label="适应画布"><svg width="28" height="28" viewBox="0 0 28 28" stroke-width="2"><rect x="1" y="1" width="26" height="26" rx="1"/><rect x="7" y="9" width="14" height="10"/><path d="M4 7V4H7M21 4H24V7M24 21V24H21M7 24H4V21"/></svg></button>
  <button class="s-full" aria-label="全屏"><svg width="28" height="28" viewBox="0 0 28 28" stroke-width="2"><rect x="1" y="1" width="26" height="26" rx="1"/><path d="M5 10V5H9M19 5H23V10M23 18V23H19M9 23H5V18M5.500 5.500L11 11M22.500 5.500L17 11M22.500 22.500L17 17M5.500 22.500L11 17"/></svg></button>
  <button aria-label="缩小"><svg width="20" height="20" viewBox="0 0 20 20" stroke="#757575" stroke-width="2" stroke-linecap="butt"><path d="M0 10H20"/></svg></button>
  <input class="zoomer" type="range" min="0" max="100" value="24" aria-label="缩放比例">
  <button aria-label="放大"><svg width="20" height="20" viewBox="0 0 20 20" stroke="#757575" stroke-width="2" stroke-linecap="butt"><path d="M0 10H20M10 0V20"/></svg></button>
  <select class="zoompick" aria-label="缩放"><option>94%</option></select>
  <svg class="mid" width="10" height="6"><use href="#caret"/></svg>
  <button class="s-fit" aria-label="适应整页"><svg width="28" height="28" viewBox="0 0 28 28" stroke-width="2" stroke-linecap="butt"><path d="M1 9V1H10M18 1H27V9M27 19V27H18M10 27H1V19"/><rect x="7" y="9" width="14" height="10"/></svg></button>
  <button class="s-last" aria-label="适应页宽"><svg width="28" height="28" viewBox="0 0 28 28" stroke-width="2"><rect x="1" y="1" width="26" height="26" rx="1"/><path d="M6 13H22M8 11L6 13L8 15M20 11L22 13L20 15"/></svg></button>
  <svg class="grip fillc" width="10" height="10" viewBox="0 0 10 10"><path d="M8 0h2v2H8zM8 4h2v2H8zM4 4h2v2H4zM8 8h2v2H8zM4 8h2v2H4zM0 8h2v2H0z"/></svg>
 </footer>
</div>
</div>
<script src="https://cdn.jsdelivr.net/npm/bootstrap@5.3.0/dist/js/bootstrap.bundle.min.js"></script>
</body>
</html>
